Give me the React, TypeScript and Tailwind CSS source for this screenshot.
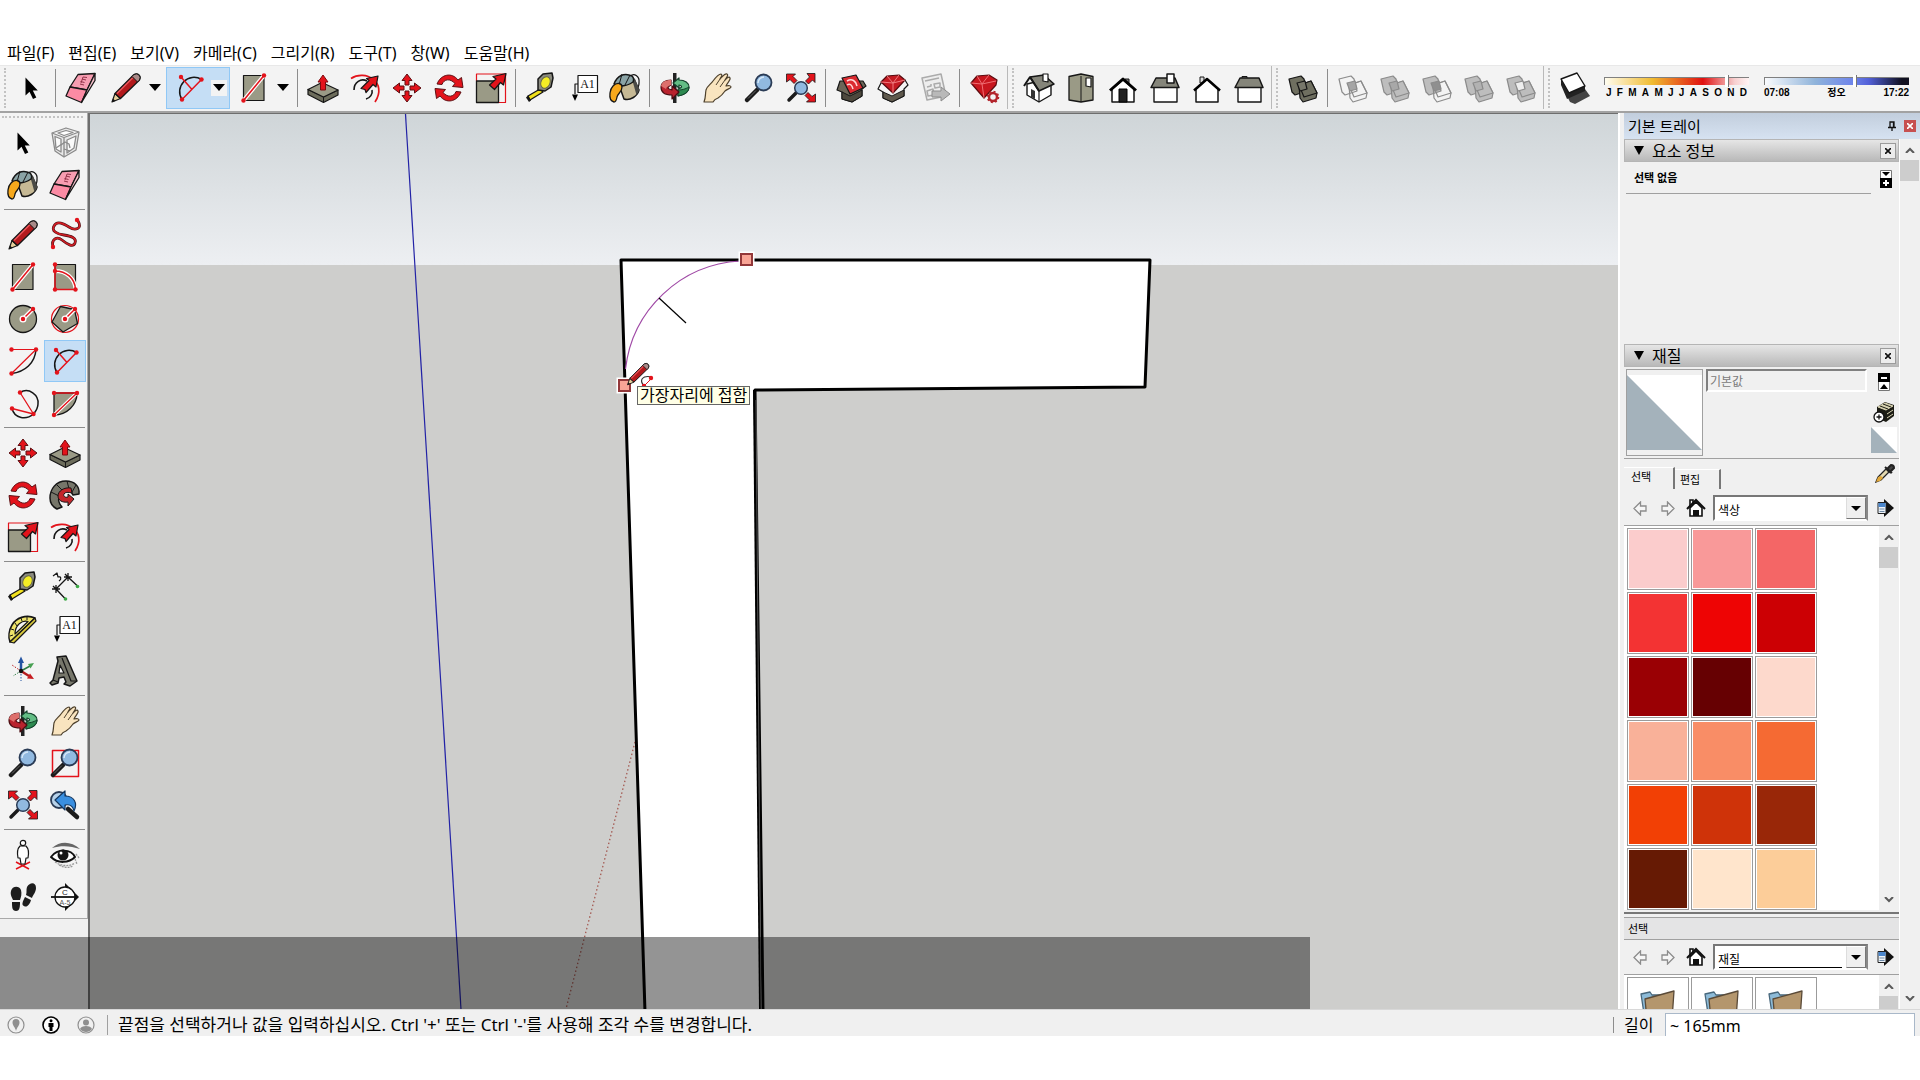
import { ReactNode } from "react";
import clsx from "clsx";

type Tool = { label: string; icon: ReactNode };

const RED = "#e3131b";
const OLIVE = "#9a9a86";
const INK = "#161616";

/* ---------- icons ---------- */

function Icon({ children }: { children: ReactNode }) {
  return (
    <svg viewBox="0 0 32 32" className="size-8 shrink-0 overflow-visible" fill="none" strokeLinejoin="round" aria-hidden="true">
      {children}
    </svg>
  );
}

function Dots({ points }: { points: [number, number][] }) {
  return (
    <>
      {points.map(([x, y]) => (
        <circle key={`${x}-${y}`} cx={x} cy={y} r="2.2" fill={RED} />
      ))}
    </>
  );
}

const BLOCK_ARROW = "M30 2 28 13 25 10.5 18 18.5 17 15.5 13 14.5 21 6.5 18.5 4.5Z";

const select = (
  <Icon>
    <path d="M10.5 5.5v18l4-3.8 3.5 7.3 3.3-1.6-3.5-6.9h5Z" fill="#000" />
  </Icon>
);

const component = (
  <Icon>
    <g stroke="#8a8a8a" strokeWidth="1.3">
      <path d="M3 6 17 1 30 5 27 23 15 30 6 24Z" fill="#e9e9e9" />
      <path d="M3 6 15 10.500 30 5M15 10.500v19M6 9.500l6 2.500v13l-5-3ZM18 13l9-4-2 12-7 5Z" fill="#fafafa" />
      <path d="M9 6 17 3.500l7 2-9 3Z" fill="#fff" />
      <path d="M12 18l4-3 4 2 1 4M7 21l6-4M15 22l6 2" />
    </g>
  </Icon>
);

const paint = (
  <Icon>
    <path d="M20 5C25 0 31 4 30 11c0 3-1 5-3 6" stroke={INK} strokeWidth="1.3" />
    <path d="M10 13 25 7l5 11c-1 6-9 11-15 9Z" fill="#c6b995" stroke={INK} strokeWidth="1.5" />
    <path d="M23 7l3 0 4.500 11-3 5-2-7Z" fill="#4a4a46" />
    <path d="M5 12C8 4 15 0 23 4c2 2 2 4 1 6-4 3-9 4-13 4Z" fill="#8aa3a5" stroke={INK} strokeWidth="1.5" />
    <path d="M13 2 10 13M21 3l-5 10" stroke={INK} strokeWidth="1" />
    <path d="M4 14c4-4 9-3 9 1 0 5-4 6-5 10-.5 3-1 5-3 5-4-1-4.500-5-4-9 .5-3 1-5 3-7Z" fill="#f6a81c" stroke={INK} strokeWidth="1.3" />
  </Icon>
);

const eraser = (
  <Icon>
    <g stroke={INK} strokeWidth="1.3">
      <path d="M13 2.500 30 1.500 22 18 5 15Z" fill="#f79db1" />
      <path d="M5 15 22 18 16.500 30.500 1 24Z" fill="#fb8ba4" />
      <path d="M30 1.500v7L16.500 30.500 22 18Z" fill="#f4c0cb" />
    </g>
    <path d="M15 12l4 1M15.500 9.500l4 1M17 7l4 1M18 5l4 .5M16 11l2-6" stroke="#93344a" strokeWidth="1" />
  </Icon>
);

const pencilShape = (
  <>
    <path d="M2 30 5 21.500 10.500 26.500Z" fill="#e6cf9a" stroke={INK} strokeWidth="1.2" />
    <path d="M2 30 3 26.500 5.500 29Z" fill={INK} />
    <path d="M5 21.500 24 2.500q3-1.500 5 .5t.5 5L10.500 26.500Z" fill="#b3191c" stroke={INK} strokeWidth="1.3" />
    <path d="M7 21.500 23 5.500" stroke="#e8555a" strokeWidth="1.5" />
    <path d="M22 4.500 24 2.500q3-1.500 5 .5t.5 5l-2 2Z" fill="#a98a88" stroke={INK} />
  </>
);
const pencil = <Icon>{pencilShape}</Icon>;

const freehandPath = "M4 28C2 20 8 17 13 21c5 4 11 8 13 3 2-5-4-7-11-8C8 15 2 12 5 7c3-6 10-2 15 1 6 4 14 2 9-6";
const freehand = (
  <Icon>
    <path d={freehandPath} stroke="#4c1013" strokeWidth="2.8" />
    <path d={freehandPath} stroke="#cf1d24" strokeWidth="1.6" />
    <Dots points={[[4, 28], [28, 1]]} />
  </Icon>
);

const rectangle = (
  <Icon>
    <path d="M5.5 3.5H26v25H5.5Z" fill={OLIVE} stroke={INK} strokeWidth="1.2" />
    <path d="M5.5 28.5 26 3.5" stroke="#fff" strokeWidth="4" />
    <path d="M5.5 28.5 26 3.5" stroke={RED} strokeWidth="1.5" />
    <Dots points={[[5.5, 28.5], [26, 3.5]]} />
  </Icon>
);

const rotatedRect = (
  <Icon>
    <path d="M6 3.5h20.500v25H6Z" fill={OLIVE} stroke={INK} strokeWidth="1.2" />
    <path d="M6 10c11 0 20 7 20.500 18.500" stroke="#fff" strokeWidth="4" />
    <path d="M6 3.5v25h20.500C26 17 17 10 6 10" stroke={RED} strokeWidth="1.5" />
    <Dots points={[[6, 3.5], [6, 10], [6, 28.5], [26.5, 28.5]]} />
  </Icon>
);

const radiusHandle = (
  <>
    <path d="M16 16 26 6" stroke="#fff" strokeWidth="4" />
    <path d="M16 16 26 6" stroke={RED} strokeWidth="1.5" />
    <circle cx="16" cy="16" r="3.5" fill="#fff" />
    <Dots points={[[16, 16], [26, 6]]} />
  </>
);

const circle = (
  <Icon>
    <circle cx="16" cy="16" r="13.5" fill={OLIVE} stroke={INK} strokeWidth="1.3" />
    {radiusHandle}
  </Icon>
);

const polygon = (
  <Icon>
    <circle cx="16" cy="16" r="13.5" stroke={RED} strokeWidth="1.2" />
    <path d="M11.500 3.500 25.500 6.500 28.500 20.500 14 29 3 19Z" fill={OLIVE} stroke={INK} strokeWidth="1.3" />
    {radiusHandle}
  </Icon>
);

const arc = (
  <Icon>
    <path d="M29 4.500C28 18 18 27 4.500 28.500" stroke={INK} strokeWidth="1.5" />
    <path d="M4.500 28.500 29 4.500H4.500" stroke={RED} strokeWidth="1.2" />
    <Dots points={[[4.5, 4.5], [29, 4.5], [4.5, 28.5]]} />
  </Icon>
);

const twoPointArc = (
  <Icon>
    <path d="M8 27.500A14.300 14.300 0 0 1 27.500 7.500" stroke={INK} strokeWidth="1.5" />
    <path d="M8 27.500 27.500 7.500M18 17.500 7 5" stroke={RED} strokeWidth="1.5" />
    <Dots points={[[7, 5], [27.5, 7.5], [8, 27.5]]} />
  </Icon>
);

const threePointArc = (
  <Icon>
    <path d="M13 5.500C22 0 32 8 31 17c0 4-2 7-4.500 10-7 6-19 5-21.500-5.500" stroke={INK} strokeWidth="1.5" />
    <path d="M13 5.500 26.500 27 5 21.500" stroke={RED} strokeWidth="1.3" />
    <Dots points={[[13, 5.5], [26.5, 27], [5, 21.5]]} />
  </Icon>
);

const pie = (
  <Icon>
    <path d="M5 28V6h23C28 18 18 28 5 28Z" fill={OLIVE} stroke={INK} strokeWidth="1.3" />
    <path d="M5 28 28 6" stroke="#fff" strokeWidth="3.5" />
    <path d="M5 28 28 6H5" stroke={RED} strokeWidth="1.4" />
    <Dots points={[[5, 6], [28, 6], [5, 28]]} />
  </Icon>
);

const pushPull = (
  <Icon>
    <path d="M1 17.500v5l15.500 8 14.500-7.500v-5L16.500 25Z" fill="#6c6c5b" stroke={INK} strokeWidth="1.2" />
    <path d="M1 17.500 15 10.500l16 7.500-14.500 7Z" fill={OLIVE} stroke={INK} strokeWidth="1.2" />
    <path d="M16.500 25v5.500" stroke={INK} />
    <path d="M16 3l5 7h-2.500v8h-5v-8H11Z" fill={RED} stroke="#7d0a0e" />
  </Icon>
);

const offset = (
  <Icon>
    <path d="M2 6.500C16-3 39 10 26 30" stroke={RED} strokeWidth="1.7" />
    <path d="M5 18C5 10 12 6 18 9M23 18c1 4-2 8-6 9" stroke={INK} strokeWidth="1.6" />
    <path d={BLOCK_ARROW} transform="translate(-1 2)" fill={RED} stroke={INK} strokeWidth="1.2" />
  </Icon>
);

const move = (
  <Icon>
    {[0, 90, 180, 270].map((deg) => (
      <path key={deg} d="M16 2l5 6.500h-3v4.500h-4V8.500h-3Z" transform={`rotate(${deg} 16 16)`} fill={RED} stroke="#5c1013" strokeWidth="1" />
    ))}
  </Icon>
);

const rotate = (
  <Icon>
    {[0, 180].map((deg) => (
      <path
        key={deg}
        d="M4 12C8 2 19 0 25 8l3.500-2.500 1.500 10-10.500-1L22 11.500C17 6 11 7 9 12.500Z"
        transform={`rotate(${deg} 16 16)`}
        fill={RED}
        stroke="#5c1013"
        strokeWidth="1"
      />
    ))}
  </Icon>
);

const scale = (
  <Icon>
    <path d="M1.500 9V2h29v28.500H23" stroke={RED} strokeWidth="1.2" />
    <path d="M1.500 9h22v21.500h-22Z" fill={OLIVE} stroke={INK} strokeWidth="1.3" />
    <path d="M31 1.500 28.500 13l-3-2.500-6 7-5-4.500L21 7l-3-2.500Z" fill={RED} stroke={INK} strokeWidth="1.2" />
  </Icon>
);

const followMe = (
  <Icon>
    <path d="M30 15C31 7 25 2 17 2 7 2 1 10 1 19c0 5 3 9 7 11l5-2c-3-3-4-6-3-10 1-5 6-8 11-7l3 5Z" fill="#76766a" stroke={INK} strokeWidth="1.5" />
    <path d="M8 6l6 6M2 13l8 4M18 2l2 8M27 6l-4 7" stroke={INK} />
    <path d="M22 9c-7-1-13 3-13 8 0 4 4 7 10 6v4l6-7-6-5v3c-3 1-5-1-4-3 1-2 4-2 8-1Z" fill="#c4262b" stroke={INK} strokeWidth="1" />
  </Icon>
);

const tape = (
  <Icon>
    <path d="M3 24 15 17l3 3L5 28Z" fill="#f1e11c" stroke={INK} strokeWidth="1.3" />
    <path d="M3 23.500l3 5-2 1.500-3-4.500Z" fill={INK} />
    <path d="M13 7 18 2l9-1 1 5-2 9-6 4-7-1Z" fill="#8b8b80" stroke={INK} strokeWidth="1.5" />
    <ellipse cx="20.500" cy="10.500" rx="4.500" ry="6" transform="rotate(25 20.500 10.500)" fill="#f4ed25" stroke="#66664a" />
  </Icon>
);

const dimension = (
  <Icon>
    <path d="M7 18 19 6M7 18l9 9.500M19 6l9.500 9M3 18h8M7 14v8M4 15l6 6M15 6h8M19 2v8M16 3l6 6" stroke={INK} strokeWidth="1.3" />
    <path d="M4 5l4-3 1 4c3-1 4 2 1 4" stroke={INK} strokeWidth="1.2" />
    <circle cx="16.500" cy="28" r="1.8" fill="#3daa46" />
    <circle cx="28.500" cy="15.500" r="1.8" fill="#3daa46" />
  </Icon>
);

const protractor = (
  <Icon>
    <path d="M3 29 28 5C19 1 9 5 5 12 2 17 1 24 3 29Z" fill="#efe46a" stroke={INK} strokeWidth="1.600" />
    <path d="M3 29l4 1L29 8l-1-3Z" fill="#d8c93c" stroke={INK} strokeWidth="1.2" />
    <path d="M8 21 21 8.500C15 7 8 12 8 21Z" fill="#f4f4f4" stroke={INK} strokeWidth="1.2" />
    <path d="M3 23l3-1M4 16l3 1M8 10l2 3M14 5l1 3M20 4v3" stroke={INK} />
  </Icon>
);

const label = (
  <Icon>
    <path d="M11 3.500h19.500v17H11Z" fill="#fff" stroke={INK} strokeWidth="1.2" />
    <path d="M11 12H8v10" stroke={INK} strokeWidth="1.2" />
    <path d="M5 22.500h6L8 29Z" fill="#000" />
    <text x="20.500" y="16" textAnchor="middle" fill="#111" className="font-['Liberation_Serif',serif] text-[12px]">A1</text>
  </Icon>
);

const axes = (
  <Icon>
    <path d="M14 16l9-5" stroke="#2c7d43" strokeWidth="1.5" />
    <path d="M14 16V6" stroke="#2354a2" strokeWidth="2.5" />
    <path d="M11 8l3-6.500L17 8Z" fill="#2354a2" />
    <path d="M27 8l-6 1 2.500 4.500Z" fill="#47a052" />
    <path d="M14 16l8 5" stroke="#b31a1d" strokeWidth="2.5" />
    <path d="M27 24l-7-.5 3-5Z" fill="#c61c20" />
    <path d="M14 16v10" stroke="#2354a2" strokeDasharray="1.5 1.5" />
    <path d="M14 16 6 21" stroke="#2c7d43" strokeDasharray="1.5 1.5" />
    <path d="M14 16 5 10" stroke="#b31a1d" strokeDasharray="1.5 1.5" />
    <circle cx="14" cy="16" r="2.2" fill="#111" />
  </Icon>
);

const text3d = (
  <Icon>
    <path d="M8 2 17 1l11 25-7 5-6-2 2-2-2-5-5 1-1 5-6 2-2-2 3-3 5-19Z" fill="#77776b" stroke={INK} strokeWidth="1.5" />
    <path d="M11 10l4 8h-5Z" fill="#f2f2f2" stroke={INK} strokeWidth="1.2" />
    <path d="M13 3l9 23 6 0M4 25l5 2" stroke={INK} strokeWidth="1.2" />
  </Icon>
);

const orbit = (
  <Icon>
    <path d="M14 1h3.500v30H14Z" fill="#222" />
    <path d="M20 8c6 0 10 3 10 7 0 5-5 8-11 9v-7c4-1 5-3 1-4v3l-6-5 6-5Z" fill="#63bd85" stroke="#12402a" strokeWidth="1.2" />
    <path d="M30 15c0 5-5 8-11 9v-6c6 0 9-2 11-3Z" fill="#2d8a50" stroke="#12402a" />
    <path d="M12 8C6 8 2 11 2 15c0 5 4 8 11 8v4l7-7-7-6v4c-4-1-6-2-1-5Z" fill="#b9232e" stroke="#4b0d12" strokeWidth="1.2" />
    <path d="M12 8C6 8 3 10 2 14l5 3c0-2 2-3 5-4Z" fill="#dd6f6c" />
  </Icon>
);

const pan = (
  <Icon>
    <path
      d="M3 30c2-5 1-7 2-12 1-4 5-6 7-9 3-4 6-7 8-7 2 1 0 3-1 5 3-3 5-6 7-5 2 1-1 4-2 6 2-2 4-4 5-2 1 2-3 5-4 8 3-1 5 0 5 1-1 2-4 2-6 4-2 3-4 5-7 7-3 1-4 2-5 4Z"
      fill="#f9e4bf"
      stroke="#4d402c"
      strokeWidth="1.2"
    />
    <path d="M19 7l-4 6M24 8l-5 7" stroke="#4d402c" />
  </Icon>
);

const lens = (
  <>
    <path d="M4 28 14 18" stroke="#1b1b1b" strokeWidth="4.5" strokeLinecap="round" />
    <path d="M5 26.500 13 18.500" stroke="#666" />
    <circle cx="20.500" cy="10.500" r="8" fill="#91b9e0" stroke="#2a3b55" strokeWidth="1.8" />
    <path d="M15 11a6 6 0 0 1 6-6" stroke="#d6e7f7" strokeWidth="1.5" />
  </>
);
const zoom = <Icon>{lens}</Icon>;

const zoomWindow = (
  <Icon>
    <path d="M3.500 3.500h26v26h-26Z" stroke={RED} strokeWidth="1.5" />
    {lens}
  </Icon>
);

const zoomExtents = (
  <Icon>
    {[0, 90, 180].map((deg) => (
      <path
        key={deg}
        d="M1.500 2h9L8 4.500l4 4-3 3-4-4L1.500 10Z"
        transform={`rotate(${deg} 16 16)`}
        fill={RED}
        stroke={INK}
        strokeWidth=".8"
      />
    ))}
    <path d="M4 28l7-7" stroke="#1b1b1b" strokeWidth="3.5" strokeLinecap="round" />
    <circle cx="16" cy="16" r="6.3" fill="#91b9e0" stroke="#2a3b55" strokeWidth="1.5" />
  </Icon>
);

const previousView = (
  <Icon>
    <path d="M19 20l9 8" stroke="#1b1b1b" strokeWidth="4.5" strokeLinecap="round" />
    <circle cx="10" cy="11" r="8" fill="#b7d2ea" stroke="#2a3b55" strokeWidth="1.8" />
    <path d="M6 11 16 2v5c9 0 13 7 9 15-1-5-4-7-9-6v5Z" fill="#3a8fe0" stroke="#14375f" strokeWidth="1.2" />
  </Icon>
);

const positionCamera = (
  <Icon>
    <path d="M9 30l14-7M9 23l13 7" stroke={RED} strokeWidth="1.5" />
    <path d="M13 7c-2 2-3 7-2 12h2l1 6h4l1-6h2c1-5 0-10-2-12Z" fill="#fff" stroke={INK} strokeWidth="1.2" />
    <circle cx="16" cy="4" r="2.7" fill="#fff" stroke={INK} strokeWidth="1.2" />
  </Icon>
);

const lookAround = (
  <Icon>
    <path d="M3 9c8-7 19-7 28 1-9-3-18-4-28-1Z" fill="#666" />
    <path d="M2 18c7-9 20-8 24 0-6 6-17 7-24 0Z" fill="#fff" stroke="#111" strokeWidth="2" />
    <circle cx="14" cy="16" r="5.5" fill="#151515" />
    <circle cx="12" cy="14" r="1.5" fill="#fff" />
    <path d="M6 23c6 4 14 5 20 1M10 26c5 3 10 3 14 1M27 15l3 4M26 20l2 5" stroke="#999" strokeWidth="1.3" strokeDasharray="2 1" />
  </Icon>
);

const walk = (
  <Icon>
    <g fill="#1d1d1d">
      <path d="M4 10c1-5 8-6 10-1 1 4 0 7-1 10l-7 0c-1-3-3-5-2-9Z" />
      <path d="M5 21l8 0c0 4 0 9-4 9s-4-4-4-9Z" />
      <path d="M20 6c3-5 9-5 9 1 0 4-3 7-4 10l-6-3c1-3 0-5 1-8Z" />
      <path d="M18 16l6 3c-1 4-4 8-7 6-3-1-1-5 1-9Z" />
    </g>
  </Icon>
);

const sectionPlane = (
  <Icon>
    <path d="M16 2v28L30 16Z" fill="#111" />
    <circle cx="16" cy="16" r="10" fill="#fff" stroke="#111" strokeWidth="1.3" />
    <path d="M2 16h27" stroke="#111" strokeWidth="1.8" />
    <text x="16" y="14" textAnchor="middle" fill="#222" className="font-['Liberation_Sans',sans-serif] text-[8px]">C</text>
    <text x="16" y="24" textAnchor="middle" fill="#555" className="font-['Liberation_Sans',sans-serif] text-[7px]">A-5</text>
  </Icon>
);

const getModels = (
  <Icon>
    <path d="M5 9 2 18l5 2v7l10 3 10-6v-7l4-3-3-5Z" fill="#6c6658" stroke={INK} strokeWidth="1.2" />
    <path d="M7 6 21 3l7 13-13 6Z" fill="#db2a30" stroke={INK} strokeWidth="1.2" />
    <path d="M12 9c5-3 9 0 10 5M12 13c3-2 5 0 6 4" stroke="#ffd9d9" strokeWidth="1.5" />
    <path d="M7 20l8 4 12-6v6l-10 6-10-3Z" fill="#4d483d" stroke={INK} />
  </Icon>
);

const shareModel = (
  <Icon>
    <path d="M4 11 1 17l5 3v6l9 4 12-6v-7l4-4-3-5Z" fill="#f4f4f4" stroke={INK} strokeWidth="1.2" />
    <path d="M4 10 10 4l12-1 6 5-12 13Z" fill="#c41a22" stroke="#54090d" strokeWidth="1.2" />
    <path d="M4 10l12 1 12-3M10 4l6 7 6-8M16 11v10" stroke="#f07a7e" strokeWidth="1" />
    <path d="M6 20l9 4 12-6v6l-12 6-9-4Z" fill="#5f594d" stroke={INK} />
  </Icon>
);

const shareComponent = (
  <Icon>
    <path d="M3 6 22 2l5 22-19 4Z" fill="#ededed" stroke="#ababab" strokeWidth="1.5" />
    <path d="M6 9l14-3M8 15l4-1v-2M8 19l6-2 1 6-6 1ZM15 12l6-1v4l-5 1Z" stroke="#ababab" strokeWidth="1.5" />
    <path d="M13 19h9v-4l9 7-9 7v-4h-9Z" fill="#b9b9b9" stroke="#8d8d8d" />
  </Icon>
);

const extensionWarehouse = (
  <Icon>
    <path d="M2 11 8 4l12-1 8 5-1 5-12 13Z" fill="#c8161e" stroke="#5e0a0e" strokeWidth="1.2" />
    <path d="M2 11l11 1 14-3M8 4l5 8 7-9M13 12l2 14" stroke="#f06e73" strokeWidth="1" />
    <circle cx="24" cy="25" r="4" fill="#f2f2f2" stroke="#b3242b" strokeWidth="2.5" />
    <circle cx="24" cy="25" r="5.5" stroke="#b3242b" strokeWidth="1.6" strokeDasharray="2 2.3" />
  </Icon>
);

const isoView = (
  <Icon>
    <path d="M4 12v11l12 7 12-7V13L21 8Z" fill="#fff" stroke={INK} strokeWidth="1.4" />
    <path d="M16 19v11" stroke={INK} strokeWidth="1.2" />
    <path d="M7 5 21 3l10 9-15 7Z" fill="#85857a" stroke={INK} strokeWidth="1.5" />
    <path d="M7 5 1 14M7 5l9 14" stroke={INK} strokeWidth="2" />
    <path d="M8 17l4 2v8l-4-2Z" fill="#333" />
    <path d="M20 2h5v8l-5-1Z" fill="#fff" stroke={INK} strokeWidth="1.2" />
  </Icon>
);

const topView = (
  <Icon>
    <path d="M4 4.500 16 2l12 2.500V28L16 30 4 28Z" fill={OLIVE} stroke={INK} strokeWidth="1.3" />
    <path d="M16 4v26" stroke={INK} />
    <path d="M21 6h5v9l-5-1Z" fill="#fff" stroke={INK} strokeWidth="1.2" />
  </Icon>
);

const frontView = (
  <Icon>
    <path d="M18 7h4v6h-4Z" fill="#777" stroke={INK} />
    <path d="M5 17v13h22V17L16 8Z" fill="#fff" stroke={INK} strokeWidth="1.5" />
    <path d="M3 18.500 16 7l13 11.500" stroke="#000" strokeWidth="3" />
    <path d="M12 17h8v13h-8Z" fill="#222" stroke="#000" />
  </Icon>
);

const sideBody = (
  <>
    <path d="M5 15h23v15H5Z" fill="#fff" stroke={INK} strokeWidth="1.4" />
    <path d="M7 6h19l4 9.500H2Z" fill="#85857a" stroke={INK} strokeWidth="1.5" />
  </>
);

const rightView = (
  <Icon>
    {sideBody}
    <path d="M18 2h7v9h-7Z" fill="#fff" stroke={INK} strokeWidth="1.5" />
  </Icon>
);

const backView = (
  <Icon>
    <path d="M9 5h4v6H9Z" fill="#ddd" stroke={INK} />
    <path d="M5 17v13h22V17L16 7Z" fill="#fff" stroke={INK} strokeWidth="1.5" />
    <path d="M3 18.500 16 7l13 11.500" stroke="#000" strokeWidth="2.5" />
  </Icon>
);

const leftView = (
  <Icon>
    <path d="M9 4.500h5V7H9Z" fill="#999" stroke={INK} />
    {sideBody}
  </Icon>
);

function Solid({ a, b, mid, line }: { a: string; b: string; mid: string; line: string }) {
  return (
    <Icon>
      <g stroke={line} strokeWidth="1.2">
        <path d="M2 7 14 4l3 3 3 12-12 4-3-3Z" fill={a} />
        <path d="M12 13l12-4 6 12-1 5-13 4-3-4Z" fill={b} />
        <path d="M12 13l12-4 6 12-13 4Z" fill={b} />
        <path d="M10 11l8-2 2 8-7 2Z" fill={mid} />
      </g>
    </Icon>
  );
}

const shadowToggle = (
  <Icon>
    <path d="M8 24l18-7 5 7-15 8-5-2Z" fill="#444" />
    <path d="M2 7v6l6 14 18-8v-5L10 19Z" fill="#222" />
    <path d="M2 7 18 1l8 13-16 7Z" fill="#fff" stroke={INK} strokeWidth="1.4" />
  </Icon>
);

/* ---------- tool lists ---------- */

const GETTING_STARTED: Tool[][] = [
  [
    { label: "밀기/끌기", icon: pushPull },
    { label: "오프셋", icon: offset },
    { label: "이동", icon: move },
    { label: "회전", icon: rotate },
    { label: "배율", icon: scale },
  ],
  [
    { label: "줄자", icon: tape },
    { label: "텍스트", icon: label },
    { label: "페인트통", icon: paint },
  ],
  [
    { label: "궤도", icon: orbit },
    { label: "팬", icon: pan },
    { label: "확대/축소", icon: zoom },
    { label: "범위 확대/축소", icon: zoomExtents },
  ],
  [
    { label: "모델 가져오기", icon: getModels },
    { label: "모델 공유", icon: shareModel },
    { label: "구성 요소 공유", icon: shareComponent },
  ],
  [{ label: "확장 프로그램", icon: extensionWarehouse }],
];

const VIEWS: Tool[] = [
  { label: "등각", icon: isoView },
  { label: "위쪽", icon: topView },
  { label: "앞쪽", icon: frontView },
  { label: "오른쪽", icon: rightView },
  { label: "뒤쪽", icon: backView },
  { label: "왼쪽", icon: leftView },
];

const SOLIDS: Tool[] = [
  { label: "교차", icon: <Solid a="#f3f3f3" b="none" mid="#a5a5a5" line="#8b8b8b" /> },
  { label: "통합", icon: <Solid a="#bdbdbd" b="#bdbdbd" mid="#a8a8a8" line="#8b8b8b" /> },
  { label: "빼기", icon: <Solid a="#bdbdbd" b="none" mid="#8f8f8f" line="#8b8b8b" /> },
  { label: "잘라내기", icon: <Solid a="#bdbdbd" b="#bdbdbd" mid="#b2b2b2" line="#8b8b8b" /> },
  { label: "분할", icon: <Solid a="#bdbdbd" b="#bdbdbd" mid="#eeeeee" line="#8b8b8b" /> },
];

const LARGE_TOOLS: Tool[][] = [
  [
    { label: "선택", icon: select },
    { label: "구성 요소 만들기", icon: component },
    { label: "페인트통", icon: paint },
    { label: "지우개", icon: eraser },
  ],
  [
    { label: "선", icon: pencil },
    { label: "자유곡선", icon: freehand },
    { label: "사각형", icon: rectangle },
    { label: "회전된 사각형", icon: rotatedRect },
    { label: "원", icon: circle },
    { label: "다각형", icon: polygon },
    { label: "원호", icon: arc },
    { label: "2점 원호", icon: twoPointArc },
    { label: "3점 원호", icon: threePointArc },
    { label: "파이", icon: pie },
  ],
  [
    { label: "이동", icon: move },
    { label: "밀기/끌기", icon: pushPull },
    { label: "회전", icon: rotate },
    { label: "따라가기", icon: followMe },
    { label: "배율", icon: scale },
    { label: "오프셋", icon: offset },
  ],
  [
    { label: "줄자", icon: tape },
    { label: "치수", icon: dimension },
    { label: "각도기", icon: protractor },
    { label: "텍스트", icon: label },
    { label: "축", icon: axes },
    { label: "3D 텍스트", icon: text3d },
  ],
  [
    { label: "궤도", icon: orbit },
    { label: "팬", icon: pan },
    { label: "확대/축소", icon: zoom },
    { label: "창 확대/축소", icon: zoomWindow },
    { label: "범위 확대/축소", icon: zoomExtents },
    { label: "이전", icon: previousView },
  ],
  [
    { label: "카메라 배치", icon: positionCamera },
    { label: "둘러보기", icon: lookAround },
    { label: "걷기", icon: walk },
    { label: "단면", icon: sectionPlane },
  ],
];

const MENUS = ["파일(F)", "편집(E)", "보기(V)", "카메라(C)", "그리기(R)", "도구(T)", "창(W)", "도움말(H)"];

const SWATCHES = [
  "#fbcccc", "#f99999", "#f46666",
  "#f33333", "#ee0404", "#cc0004",
  "#9a0004", "#660002", "#fdd9cc",
  "#f9b199", "#f98d66", "#f56a33",
  "#f24005", "#cf3309", "#992708",
  "#661a04", "#ffe5cc", "#fccd99",
];

/* ---------- shared pieces ---------- */

function ToolButton({ tool, active = false }: { tool: Tool; active?: boolean }) {
  return (
    <button
      type="button"
      aria-label={tool.label}
      className={clsx(
        "flex size-[42px] shrink-0 items-center justify-center border",
        active ? "border-[#90c8f6] bg-[#c5def5]" : "border-transparent"
      )}
    >
      {tool.icon}
    </button>
  );
}

function MenuToolButton({ tool, active = false }: { tool: Tool; active?: boolean }) {
  return (
    <button
      type="button"
      aria-label={tool.label}
      className={clsx(
        "flex h-[42px] w-16 shrink-0 items-center justify-between border pr-[2px] pl-[7px]",
        active ? "border-[#90c8f6] bg-[#c5def5]" : "border-transparent"
      )}
    >
      {tool.icon}
      <span className={clsx("flex size-4 items-center justify-center", active && "bg-[#f3f3f3]")}>
        <DownTriangle />
      </span>
    </button>
  );
}

function DownTriangle() {
  return (
    <svg viewBox="0 0 12 7" className="h-[7px] w-3 shrink-0" aria-hidden="true">
      <path d="M0 0h12L6 7Z" fill="#000" />
    </svg>
  );
}

function Separator() {
  return <div className="mx-[3px] h-[38px] w-[2px] shrink-0 border-l border-[#8c8c8c]" />;
}

function Grip() {
  return <div className="ml-1 mr-[3px] h-10 w-[3px] shrink-0 border-l-2 border-dotted border-[#c2c2c2]" />;
}

function ToolbarEdge() {
  return <div className="h-full w-[2px] shrink-0 border-r border-[#b9b9b9]" />;
}

function Chevron({ up = false }: { up?: boolean }) {
  return (
    <svg viewBox="0 0 10 6" className={clsx("h-[6px] w-[10px] shrink-0", up && "rotate-180")} aria-hidden="true">
      <path d="M1 0l4 4 4-4" fill="none" stroke="#5a5a5a" strokeWidth="2" />
    </svg>
  );
}

/* ---------- top toolbar ---------- */

function ShadowSliders() {
  const range =
    "h-2 w-full appearance-none border-l border-t border-[#808080] [&::-webkit-slider-thumb]:h-3 [&::-webkit-slider-thumb]:w-1 [&::-webkit-slider-thumb]:appearance-none [&::-webkit-slider-thumb]:border-r [&::-webkit-slider-thumb]:border-[#777] [&::-webkit-slider-thumb]:bg-white";

  return (
    <div className="flex min-w-0 flex-1 gap-[15px] pl-2 pr-[11px] font-['Liberation_Sans','Noto_Sans_CJK_KR',sans-serif] text-[10px] font-bold leading-3 text-black">
      <div className="flex flex-1 flex-col gap-[2px]">
        <input
          type="range"
          aria-label="날짜"
          min={1}
          max={365}
          defaultValue={312}
          className={clsx(range, "bg-[linear-gradient(to_right,#fffdf0,#f0bb30_33%,#e01010_68%,#f7d0d0_90%,#fff4f4)]")}
        />
        <div className="flex justify-between px-[2px]">
          {"JFMAMJJASOND".split("").map((m, i) => (
            <span key={i}>{m}</span>
          ))}
        </div>
      </div>
      <div className="flex flex-1 flex-col gap-[2px]">
        <input
          type="range"
          aria-label="시간"
          min={0}
          max={100}
          defaultValue={63}
          className={clsx(range, "bg-[linear-gradient(to_right,#fafbfd,#8fb3da_35%,#6f86ea_60%,#5260d8_72%,#101020_95%)]")}
        />
        <div className="flex justify-between">
          <span>07:08</span>
          <span>정오</span>
          <span>17:22</span>
        </div>
      </div>
    </div>
  );
}

function TopToolbar() {
  return (
    <div className="flex h-12 shrink-0 items-center overflow-hidden border-b-2 border-t border-b-[#a2a2a2] border-t-[#e8e8e8] bg-[#f3f3f3] pb-[2px]">
      <Grip />
      <ToolButton tool={{ label: "선택", icon: select }} />
      <Separator />
      <ToolButton tool={{ label: "지우개", icon: eraser }} />
      <MenuToolButton tool={{ label: "선", icon: pencil }} />
      <MenuToolButton tool={{ label: "2점 원호", icon: twoPointArc }} active />
      <MenuToolButton tool={{ label: "사각형", icon: rectangle }} />
      {GETTING_STARTED.map((group, i) => (
        <div key={i} className="flex shrink-0 items-center">
          <Separator />
          {group.map((tool) => (
            <ToolButton key={tool.label} tool={tool} />
          ))}
        </div>
      ))}
      <ToolbarEdge />
      <Grip />
      {VIEWS.map((tool) => (
        <ToolButton key={tool.label} tool={tool} />
      ))}
      <ToolbarEdge />
      <Grip />
      <ToolButton tool={{ label: "외부 셸", icon: <Solid a="#6f6f60" b="#6f6f60" mid="#77776a" line="#161616" /> }} />
      <Separator />
      {SOLIDS.map((tool) => (
        <ToolButton key={tool.label} tool={tool} />
      ))}
      <ToolbarEdge />
      <Grip />
      <ToolButton tool={{ label: "그림자 표시", icon: shadowToggle }} />
      <ShadowSliders />
    </div>
  );
}

/* ---------- left tool set ---------- */

function LargeToolSet() {
  return (
    <div className="w-[88px] shrink-0 bg-[#f0f0f0]">
      <div className="border-b border-r border-[#a9a9a9] bg-[#f3f3f3] pl-[2px]">
        <div className="h-[9px] pt-[3px]">
          <div className="mr-1 border-t-2 border-dotted border-[#c2c2c2]" />
        </div>
        {LARGE_TOOLS.map((group, i) => (
          <div key={i}>
            {i > 0 && <div className="mx-[2px] my-[3px] h-[2px] border-t border-[#8c8c8c]" />}
            <div className="grid w-[84px] grid-cols-2">
              {group.map((tool) => (
                <ToolButton key={tool.label} tool={tool} active={tool.label === "2점 원호"} />
              ))}
            </div>
          </div>
        ))}
      </div>
    </div>
  );
}

/* ---------- viewport ---------- */

function Viewport() {
  return (
    <div className="relative min-w-0 flex-1 overflow-hidden border-l-2 border-t border-[#6e6e6e] bg-[#cececc]">
      <svg viewBox="90 114 1529 895" preserveAspectRatio="xMinYMin slice" className="absolute inset-0 size-full" aria-label="모델">
        <defs>
          <linearGradient id="sky" x1="0" y1="0" x2="0" y2="1">
            <stop offset="0" stopColor="#cfd5d8" />
            <stop offset="1" stopColor="#edeff2" />
          </linearGradient>
        </defs>
        <rect x="90" y="114" width="1529" height="151" fill="url(#sky)" />
        <path d="M405.500 114 461 1009" stroke="#2222a6" strokeWidth="1.2" />
        <path d="M635 742 566 1009" stroke="#a05048" strokeWidth="1.2" strokeDasharray="1.5 2.5" />
        <path d="M621 260H1150L1145 387 755 390 763 1012H645L625 385Z" fill="#fff" stroke="#000" strokeWidth="3" strokeLinejoin="round" />
        <path d="M754 390 760 1009" stroke="#000" strokeWidth="2" />
        <path d="M756 400 761 1009" stroke="#555" strokeWidth="1" />
        <path d="M625.500 369A122 122 0 0 1 740 261" fill="none" stroke="#a04aa6" strokeWidth="1.2" />
        <path d="M659 298 686 323" stroke="#000" strokeWidth="1.2" />
        {[[746.5, 259.5], [624.5, 385.5]].map(([x, y]) => (
          <g key={x}>
            <rect x={x - 8} y={y - 8} width="16" height="16" fill="#fff" />
            <rect x={x - 5.5} y={y - 5.5} width="11" height="11" fill="#f9a596" stroke="#93383a" strokeWidth="2" />
          </g>
        ))}
        <g transform="translate(626 362) scale(.76)" fill="none">
          {pencilShape}
        </g>
        <g fill="none">
          <path d="M644 386C639 380 642 375 652 377" stroke="#333" strokeWidth="1.2" />
          <path d="M644 386 652 378" stroke={RED} />
          <Dots points={[[644, 386], [651, 378]]} />
        </g>
      </svg>
      <div role="tooltip" className="absolute left-[547px] top-[272px] whitespace-nowrap border border-[#666] bg-[#ffffe6] px-[2px] text-[16px] leading-[17px] text-black">
        가장자리에 접함
      </div>
    </div>
  );
}

/* ---------- tray ---------- */

function PanelHeader({ title }: { title: string }) {
  return (
    <div className="flex h-[23px] shrink-0 items-center border border-[#b5b5b5] bg-linear-to-b from-[#e6e6e6] to-[#b9b9b9] pl-[9px] pr-[2px] text-[16px] leading-5 text-black">
      <svg viewBox="0 0 10 9" className="mr-2 h-[9px] w-[10px]" aria-hidden="true">
        <path d="M0 0h10L5 9Z" fill="#000" />
      </svg>
      <h2 className="flex-1">{title}</h2>
      <button type="button" aria-label={`${title} 닫기`} className="flex size-4 items-center justify-center border border-[#9b9b9b] bg-[#ececec]">
        <CloseMark color="#111" />
      </button>
    </div>
  );
}

function CloseMark({ color }: { color: string }) {
  return (
    <svg viewBox="0 0 6 6" className="size-[6px]" aria-hidden="true">
      <path d="M0 0l6 6M6 0 0 6" stroke={color} strokeWidth="1.6" />
    </svg>
  );
}

function NavArrow() {
  return (
    <svg viewBox="0 0 14 15" className="h-[15px] w-[14px]" aria-hidden="true">
      <path d="M1 7.500 7.500 1v4H13v5H7.500v4Z" fill="#f6f6f6" stroke="#8c8c8c" strokeWidth="1.3" />
    </svg>
  );
}

function NavRow({ name, value, underline = false }: { name: string; value: string; underline?: boolean }) {
  return (
    <div className="flex h-[35px] shrink-0 items-center border-b border-[#a0a0a0] pl-[9px] pr-[5px]">
      <button type="button" aria-label="뒤로" className="mr-[14px]">
        <NavArrow />
      </button>
      <button type="button" aria-label="앞으로" className="mr-[11px] rotate-180">
        <NavArrow />
      </button>
      <button type="button" aria-label="모델 내" className="mr-[7px]">
        <svg viewBox="0 0 20 20" className="size-5" fill="none" aria-hidden="true">
          <path d="M4 9V2h3v5M4 10v8h12v-8L10 4Z" fill="#fff" stroke="#111" strokeWidth="1.6" />
          <path d="M1 11 10 2l9 9" stroke="#111" strokeWidth="2" />
          <path d="M7 12h6v6H7Z" fill="#111" />
        </svg>
      </button>
      <div className="relative h-[26px] flex-1 border-2 border-b-white border-l-[#777] border-r-[#888] border-t-[#777] bg-white">
        <select aria-label={name} className="h-full w-full appearance-none pl-[3px] text-[12px] leading-4 text-black">
          <option>{value}</option>
        </select>
        {underline && <div className="pointer-events-none absolute bottom-0 left-1 right-6 border-b border-black" />}
        <div className="pointer-events-none absolute inset-y-0 right-0 flex w-5 items-center justify-center border border-b-[#777] border-l-[#ddd] border-r-[#777] border-t-white bg-[#f0f0f0]">
          <svg viewBox="0 0 10 5" className="h-[5px] w-[10px]" aria-hidden="true">
            <path d="M0 0h10L5 5Z" fill="#000" />
          </svg>
        </div>
      </div>
      <button type="button" aria-label="세부 정보" className="ml-[9px]">
        <svg viewBox="0 0 17 18" className="h-[18px] w-[17px]" aria-hidden="true">
          <path d="M7 0l10 9-10 9Z" fill="#111" />
          <path d="M1 3.500h8v11H1Z" fill="#eef4fa" stroke="#222" />
          <path d="M1.500 4h7v4h-7Z" fill="#4a86cc" />
          <path d="M2.500 10h5M2.500 12.500h5" stroke="#6d88a5" />
        </svg>
      </button>
    </div>
  );
}

function DiagonalSwatch({ className }: { className: string }) {
  return (
    <svg viewBox="0 0 10 10" preserveAspectRatio="none" className={className} aria-hidden="true">
      <path d="M0 0h10v10H0Z" fill="#fff" />
      <path d="M0 0v10h10Z" fill="#a4b2bb" />
    </svg>
  );
}

function FolderIcon() {
  return (
    <svg viewBox="0 0 36 30" className="mt-3 h-[30px] w-9" strokeLinejoin="round" aria-hidden="true">
      <path d="M1 4l9-2 2 3h11v25H5Z" fill="#8dbbd8" stroke="#47677c" strokeWidth="1.3" />
      <path d="M5 9 34 1l-2 29H7Z" fill="#b4966d" stroke="#5a4a38" strokeWidth="1.3" />
    </svg>
  );
}

function PaneToggle({ flipped = false }: { flipped?: boolean }) {
  return (
    <svg viewBox="0 0 12 18" className="h-[18px] w-3" aria-hidden="true">
      <path d="M.5.5h11v17H.5Z" fill="#fff" stroke="#777" />
      {flipped ? (
        <>
          <path d="M0 8h12v10H0Z" fill="#000" />
          <path d="M2 2h8L6 6Z" fill="#000" />
          <path d="M3 13h6M6 10v6" stroke="#fff" strokeWidth="2" />
        </>
      ) : (
        <>
          <path d="M0 0h12v9H0Z" fill="#000" />
          <path d="M3 4h6v2H3Z" fill="#fff" />
          <path d="M6 11l4 5H2Z" fill="#000" />
        </>
      )}
    </svg>
  );
}

function ScrollStrip({ down = true }: { down?: boolean }) {
  return (
    <div className="flex w-5 shrink-0 flex-col items-center justify-between bg-[#f0f0f0]">
      <div className="w-full pr-px">
        <div className="flex h-[21px] items-center justify-center">
          <Chevron up />
        </div>
        <div className="h-[21px] bg-[#cdcdcd]" />
      </div>
      {down && (
        <div className="flex h-[21px] items-center">
          <Chevron />
        </div>
      )}
    </div>
  );
}

function Tray() {
  return (
    <aside className="flex w-[302px] shrink-0 flex-col border-l-2 border-white bg-[#f0f0f0] pl-[4px] text-black">
      <div className="flex h-[26px] shrink-0 items-center bg-linear-to-b from-[#c2cedd] to-[#d6e2f1] pl-1 pr-1">
        <h1 className="flex-1 text-[15px] leading-5">기본 트레이</h1>
        <button type="button" aria-label="자동 숨기기" className="mr-2">
          <svg viewBox="0 0 8 10" className="h-[10px] w-2" fill="none" aria-hidden="true">
            <path d="M2 6V1h4v5M0 6.500h8M4 7v3M5.500 1v5" stroke="#111" strokeWidth="1.3" />
          </svg>
        </button>
        <button type="button" aria-label="트레이 닫기" className="flex size-3 items-center justify-center bg-[#c75050]">
          <CloseMark color="#fff" />
        </button>
      </div>

      <div className="flex min-h-0 flex-1">
        <div className="flex min-w-0 flex-1 flex-col border-r border-white">
          <PanelHeader title="요소 정보" />
          <div className="h-[182px] shrink-0">
            <div className="relative ml-[2px] mr-[28px] flex h-8 items-center border-b border-[#a0a0a0] pl-2 text-[11px] font-bold leading-4">
              선택 없음
              <button type="button" aria-label="세부 정보 표시" className="absolute -right-[21px] top-2">
                <PaneToggle flipped />
              </button>
            </div>
          </div>
          <PanelHeader title="재질" />

          {/* Current material */}
          <div className="flex h-[92px] shrink-0 items-start border-b border-[#a0a0a0] pl-[2px] pr-[2px] pt-[2px]">
            <div className="flex h-[87px] w-[77px] flex-col border border-[#a0a0a0] py-[5px]">
              <DiagonalSwatch className="h-full w-full" />
            </div>
            <input
              aria-label="재질 이름"
              defaultValue="기본값"
              disabled
              className="ml-[3px] h-[23px] min-w-0 flex-1 border-2 border-b-white border-l-[#808080] border-r-white border-t-[#808080] bg-[#f0f0f0] pl-[2px] text-[12px] leading-4 text-[#7b7b7b]"
            />
            <div className="ml-1 flex w-[26px] flex-col items-center pt-1">
              <button type="button" aria-label="보조 선택 창 표시">
                <PaneToggle />
              </button>
              <button type="button" aria-label="재질 만들기" className="mt-[10px]">
                <svg viewBox="0 0 22 22" className="size-[22px]" aria-hidden="true">
                  <path d="M4 6 12 1l9 3v11l-8 6-9-4Z" fill="#1c1c14" />
                  <path d="M5 6l7-4 8 3-7 4ZM14 13l6-4M14 17l6-4" fill="#d8d3b2" stroke="#d8d3b2" />
                  <path d="M7 5l8 3M10 3l8 3" stroke="#1c1c14" />
                  <circle cx="6" cy="16" r="5" fill="#fff" stroke="#111" strokeWidth="1.3" />
                  <path d="M3.500 16h5M6 13.500v5" stroke="#111" strokeWidth="1.3" />
                </svg>
              </button>
              <button type="button" aria-label="기본 재질" className="mt-1">
                <DiagonalSwatch className="size-[26px]" />
              </button>
            </div>
          </div>

          {/* Tabs */}
          <div className="flex h-8 shrink-0 items-start justify-between pr-1 pt-2 text-[11px] leading-4">
            <div role="tablist" className="flex items-end">
              <button type="button" role="tab" aria-selected="true" className="flex h-[22px] w-[51px] items-center border-r-2 border-t border-r-[#777] border-t-white pb-[3px] pl-[7px]">
                선택
              </button>
              <button type="button" role="tab" aria-selected="false" className="flex h-5 w-[46px] items-center border-r-2 border-t border-r-[#777] border-t-white pl-[5px]">
                편집
              </button>
            </div>
            <button type="button" aria-label="샘플 페인트" className="-mt-1">
              <svg viewBox="0 0 20 20" className="size-5" aria-hidden="true">
                <path d="M1 19 3 14l8-8 3 3-8 8Z" fill="#e4d9b0" stroke="#222" strokeWidth="1.3" />
                <path d="M1 19l2-5 3-1 2 2-3 3Z" fill="#e3a93a" />
                <path d="M10 4l7 6M12 6l4-4q3 0 3 3l-4 4Z" fill="#444" stroke="#222" strokeWidth="2" />
              </svg>
            </button>
          </div>
          <NavRow name="재질 라이브러리" value="색상" />

          <div className="flex min-h-0 flex-1 overflow-hidden bg-white">
            <div className="flex-1 pl-[3px] pt-[2px]">
              <div className="grid w-[190px] grid-cols-3 gap-[2px]">
                {SWATCHES.map((color) => (
                  <button key={color} type="button" aria-label={color} className="h-[62px] border border-[#9b9b9b] p-px">
                    <span className="block h-full" style={{ backgroundColor: color }} />
                  </button>
                ))}
              </div>
            </div>
            <ScrollStrip />
          </div>

          {/* Secondary selection pane */}
          <div className="mt-[2px] h-[6px] shrink-0 border-b border-t-2 border-b-[#a0a0a0] border-t-[#777]" />
          <div className="flex h-[22px] shrink-0 items-center border-b border-[#a0a0a0] bg-[#e4e4e5] pl-1 text-[11px] leading-4">선택</div>
          <NavRow name="보조 라이브러리" value="재질" underline />
          <div className="flex h-[34px] shrink-0 overflow-hidden bg-white">
            <div className="flex flex-1 gap-[2px] pl-[3px] pt-[2px]">
              {[1, 2, 3].map((n) => (
                <button key={n} type="button" aria-label={`폴더 ${n}`} className="flex size-[62px] items-start justify-center border border-[#9b9b9b]">
                  <FolderIcon />
                </button>
              ))}
            </div>
            <ScrollStrip down={false} />
          </div>
        </div>
        <ScrollStrip />
      </div>
    </aside>
  );
}

/* ---------- status bar ---------- */

function StatusBar() {
  return (
    <footer className="flex h-[27px] shrink-0 items-center overflow-hidden border-t border-[#d8d8d8] bg-[#f0f0f0] pl-[7px] pr-[5px] pt-1 text-[17px] leading-6 text-black">
      <div className="flex items-center gap-[17px]">
        <button type="button" aria-label="위치 정보">
          <svg viewBox="0 0 18 18" className="size-[18px]" fill="none" aria-hidden="true">
            <circle cx="9" cy="9" r="8" stroke="#8f8f8f" strokeWidth="1.2" />
            <path d="M9 15C8 11 5.500 9.500 5.500 6.500a3.500 3.500 0 0 1 7 0C12.500 9.500 10 11 9 15Z" fill="#8f8f8f" />
          </svg>
        </button>
        <button type="button" aria-label="제작자">
          <svg viewBox="0 0 18 18" className="size-[18px]" fill="none" aria-hidden="true">
            <circle cx="9" cy="9" r="8" fill="#fff" stroke="#000" strokeWidth="1.6" />
            <circle cx="9" cy="4.700" r="1.5" fill="#000" />
            <path d="M6.500 7h5v4h-1v4h-3v-4h-1Z" fill="#000" />
          </svg>
        </button>
        <button type="button" aria-label="로그인">
          <svg viewBox="0 0 18 18" className="size-[18px]" fill="none" aria-hidden="true">
            <circle cx="9" cy="9" r="8" stroke="#8f8f8f" strokeWidth="1.2" />
            <circle cx="9" cy="6.500" r="3" fill="#8f8f8f" />
            <path d="M3 13c1-4 11-4 12 0-3 4-9 4-12 0Z" fill="#8f8f8f" />
          </svg>
        </button>
      </div>
      <div className="ml-3 mr-[10px] h-5 border-l border-[#a0a0a0]" />
      <p className="flex-1 whitespace-nowrap">끝점을 선택하거나 값을 입력하십시오. Ctrl '+' 또는 Ctrl '-'를 사용해 조각 수를 변경합니다.</p>
      <div className="mr-[10px] h-4 border-l border-[#8c8c8c]" />
      <label htmlFor="length" className="w-[41px] text-[16px]">길이</label>
      <input id="length" defaultValue="~ 165mm" className="h-6 w-[250px] border border-b-0 border-[#a9b8c9] bg-white pl-1 text-[16px]" />
    </footer>
  );
}

export default function App() {
  return (
    <div className="flex h-screen flex-col bg-white py-11 font-['Noto_Sans','Noto_Sans_CJK_KR',sans-serif]">
      <nav className="flex h-[21px] shrink-0 items-center gap-[14px] pb-[3px] pl-[7px] text-[16px] leading-5 text-black">
        {MENUS.map((menu) => (
          <button key={menu} type="button" className="whitespace-nowrap">
            {menu}
          </button>
        ))}
      </nav>
      <TopToolbar />
      <main className="relative flex min-h-0 flex-1">
        <LargeToolSet />
        <Viewport />
        <Tray />
        <div className="pointer-events-none absolute bottom-0 left-0 h-18 w-[1310px] bg-black/42" />
      </main>
      <StatusBar />
    </div>
  );
}
